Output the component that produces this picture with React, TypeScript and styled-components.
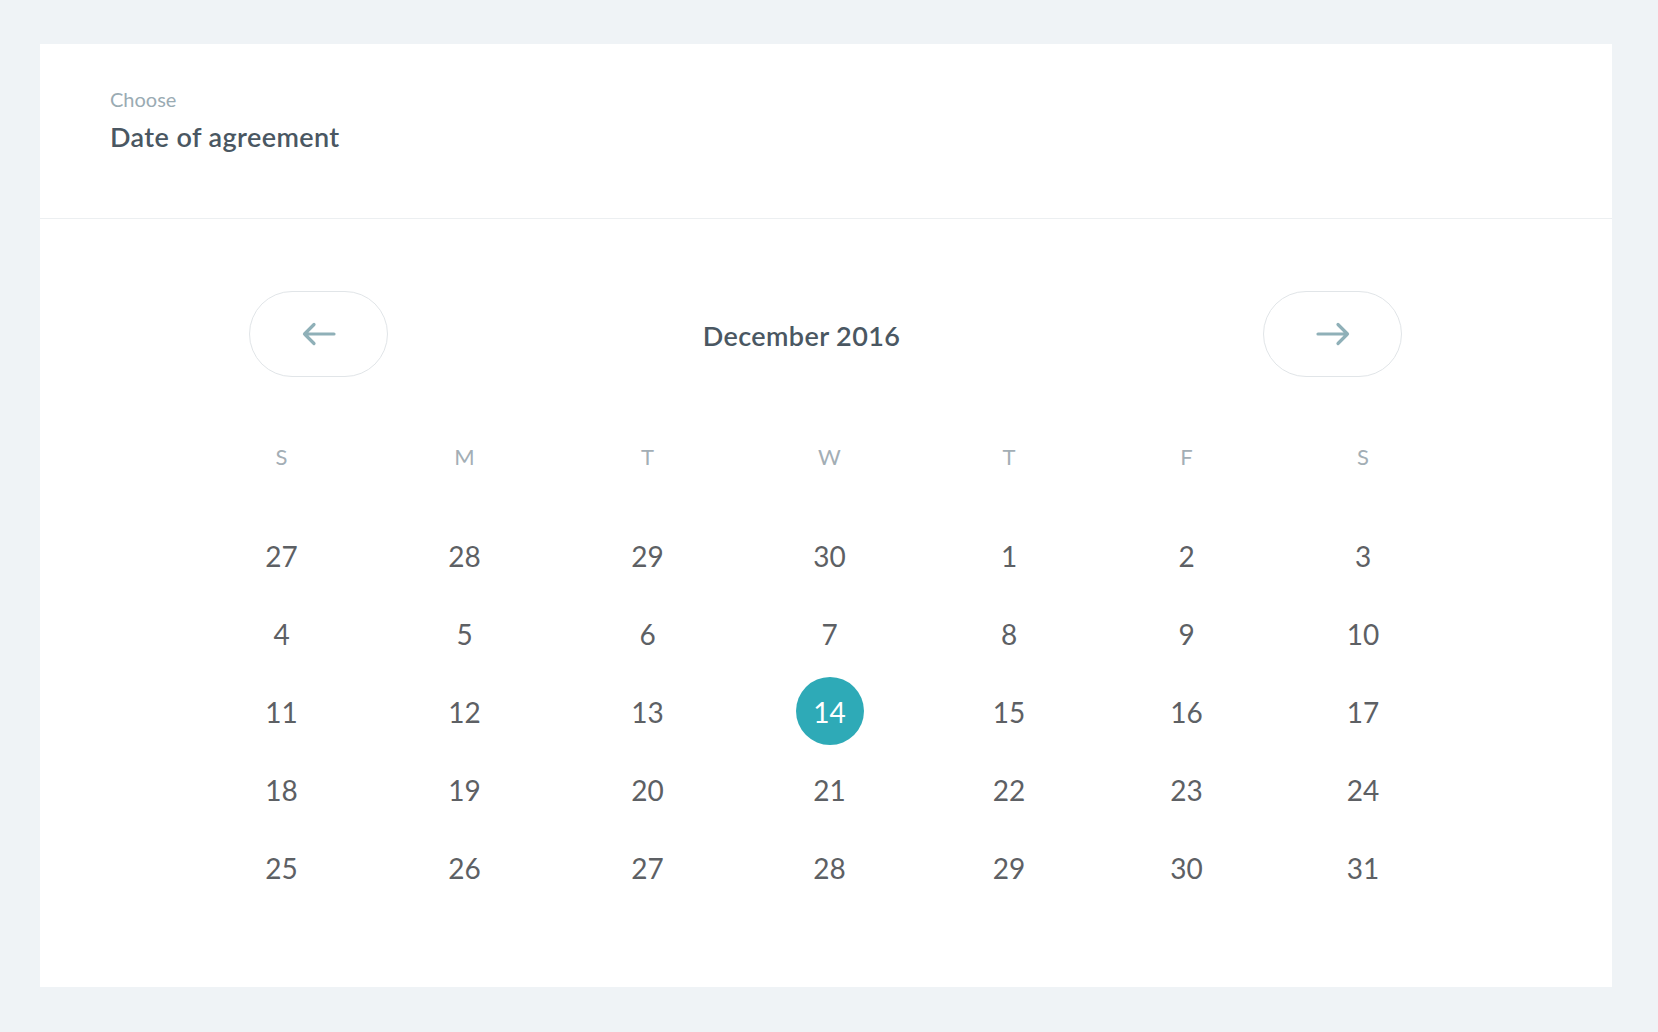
import React from "react";
import styled, { createGlobalStyle } from "styled-components";

const GlobalStyle = createGlobalStyle`
  html, body {
    margin: 0;
    padding: 0;
    background: #eff3f6;
  }
  body {
    font-family: Lato, "Open Sans", "Liberation Sans", sans-serif;
    -webkit-font-smoothing: antialiased;
  }
`;

const Page = styled.div`
  width: 1658px;
  height: 1032px;
  padding: 44px 0 0 40px;
  box-sizing: border-box;
`;

const Card = styled.section`
  width: 1572px;
  height: 943px;
  background: #ffffff;
  display: flex;
  flex-direction: column;
`;

const Header = styled.header`
  height: 175px;
  box-sizing: border-box;
  padding: 43px 0 0 70px;
  border-bottom: 1px solid #eceff1;
  display: flex;
  flex-direction: column;
  gap: 10px;
`;

const Eyebrow = styled.div`
  font-size: 20px;
  line-height: 24px;
  color: #9aabb3;
  font-weight: 400;
`;

const Heading = styled.h1`
  margin: 0;
  font-size: 27px;
  line-height: 32px;
  letter-spacing: 0.4px;
  color: #4a5762;
  font-weight: 600;
`;

const Body = styled.div`
  display: flex;
  flex-direction: column;
  padding-top: 72px;
`;

const Nav = styled.div`
  display: flex;
  align-items: center;
  padding: 0 210px 0 209px;
`;

const NavButton = styled.button`
  width: 139px;
  height: 86px;
  border-radius: 43px;
  border: 1px solid #e1e5e8;
  background: #ffffff;
  display: flex;
  align-items: center;
  justify-content: center;
  padding: 0;
  cursor: pointer;
`;

const MonthTitle = styled.div`
  flex: 1;
  text-align: center;
  font-size: 27px;
  line-height: 32px;
  letter-spacing: 0.4px;
  font-weight: 600;
  color: #4a5762;
  padding: 3px 48px 0 0;
`;

const Grid = styled.div`
  display: grid;
  grid-template-columns: 183px 183px 183px 181px 178px 177px 176px;
  margin: 60px 0 0 150px;
`;

const DayName = styled.div`
  height: 40px;
  line-height: 40px;
  text-align: center;
  font-size: 22px;
  color: #a3aeb5;
  margin-bottom: 39px;
`;

const Cell = styled.div`
  height: 78px;
  display: flex;
  align-items: center;
  justify-content: center;
`;

const DayNumber = styled.span<{ $selected?: boolean }>`
  width: 68px;
  height: 68px;
  border-radius: 50%;
  display: flex;
  align-items: center;
  justify-content: center;
  font-size: 28px;
  line-height: 1;
  padding-top: 1px;
  box-sizing: border-box;
  color: ${(p) => (p.$selected ? "#ffffff" : "#5d6064")};
  background: ${(p) => (p.$selected ? "#2eaab7" : "transparent")};
`;

const Arrow = ({ dir }: { dir: "left" | "right" }) => (
  <svg
    width="34"
    height="24"
    viewBox="0 0 34 24"
    fill="none"
    stroke="#8fb0b8"
    strokeWidth="3.2"
    strokeLinecap="round"
    strokeLinejoin="round"
    style={dir === "right" ? { transform: "scaleX(-1)" } : undefined}
  >
    <path d="M2.5 12 H32 M12 2.5 L2.5 12 L12 21.5" />
  </svg>
);

const dayNames = ["S", "M", "T", "W", "T", "F", "S"];
const days = [
  27, 28, 29, 30, 1, 2, 3,
  4, 5, 6, 7, 8, 9, 10,
  11, 12, 13, 14, 15, 16, 17,
  18, 19, 20, 21, 22, 23, 24,
  25, 26, 27, 28, 29, 30, 31,
];

export default function App() {
  return (
    <>
      <GlobalStyle />
      <Page>
        <Card>
          <Header>
            <Eyebrow>Choose</Eyebrow>
            <Heading>Date of agreement</Heading>
          </Header>
          <Body>
            <Nav>
              <NavButton aria-label="Previous month">
                <Arrow dir="left" />
              </NavButton>
              <MonthTitle>December 2016</MonthTitle>
              <NavButton aria-label="Next month">
                <Arrow dir="right" />
              </NavButton>
            </Nav>
            <Grid>
              {dayNames.map((d, i) => (
                <DayName key={"h" + i}>{d}</DayName>
              ))}
              {days.map((d, i) => (
                <Cell key={i}>
                  <DayNumber $selected={i === 17}>{d}</DayNumber>
                </Cell>
              ))}
            </Grid>
          </Body>
        </Card>
      </Page>
    </>
  );
}
